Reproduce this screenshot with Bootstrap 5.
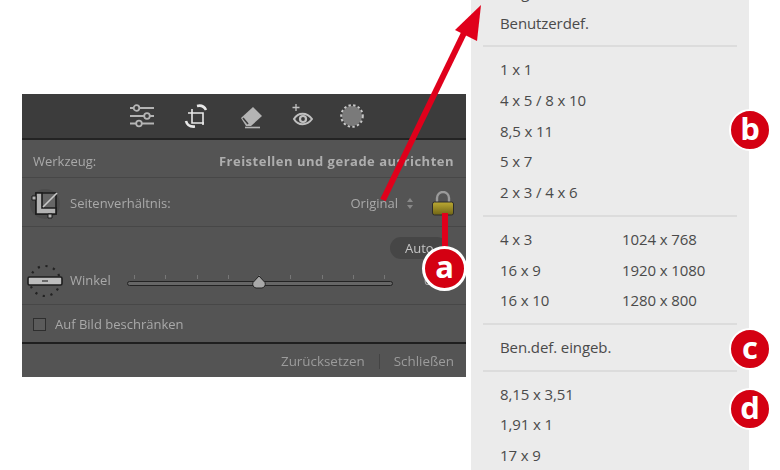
<!DOCTYPE html>
<html lang="de">
<head>
  <meta charset="UTF-8">
  <meta name="viewport" content="width=device-width, initial-scale=1.0">
  <title>Freistellen</title>
  <link href="https://cdn.jsdelivr.net/npm/bootstrap@5.3.0/dist/css/bootstrap.min.css" rel="stylesheet">
  <script src="https://cdn.jsdelivr.net/npm/bootstrap@5.3.0/dist/js/bootstrap.bundle.min.js" defer></script>
  <style>
    body { background: #fff; font-family: "Open Sans", "Liberation Sans", sans-serif; }
    .stage { width: 780px; height: 470px; overflow: hidden; }

    /* dark panel */
    .crop-panel { width: 444px; height: 283px; margin: 94px 0 0 22px; background: #545454; color: #a9a9a9; font-size: 13px; filter: blur(.35px); }
    .tool-bar { height: 46px; background: #3c3c3c; border-bottom: 2px solid #232323; gap: 27px; padding-left: 108px; }
    .tool-row { padding: 0 12px 0 11px; border-bottom: 1px solid #474747; }
    .row-tool { height: 38px; padding-top: 6px; }
    .row-aspect { height: 49px; padding-left: 8px; padding-top: 3px; }
    .row-angle { height: 78px; padding-left: 5px; position: relative; }
    .row-limit { height: 39px; padding-top: 2px; border-bottom: 2px solid #1f1f1f; }
    .row-foot { height: 33px; padding-top: 2px; font-size: 13.4px; color: #9c9c9c; }
    .tool-title { font-weight: 700; letter-spacing: .5px; color: #aeaeae; }
    .aspect-label { margin-left: 10px; }
    .aspect-stepper { margin: 0 19px 0 9px; }
    .auto-pill { position: absolute; left: 368px; top: 10px; width: 58px; height: 22px; padding-left: 15px; border-radius: 11px; background: #464646; color: #c4c4c4; line-height: 22px; }
    .angle-line { margin-top: 36px; }
    .angle-label { margin-left: 7px; width: 57px; }
    .slider-track { width: 266px; height: 5px; margin-top: 4px; border: 1px solid #232323; background: #666; border-radius: 3px; position: relative; }
    .slider-track::before { content: ""; position: absolute; left: 6px; right: 6px; top: -7px; height: 4px; background: repeating-linear-gradient(90deg, #777 0 1px, transparent 1px 31.3px); }
    .slider-thumb { position: absolute; left: 124px; top: -7px; }
    .angle-value { margin-left: 31px; }
    .limit-box { width: 13px; height: 13px; border: 1px solid #2e2e2e; background: #5b5b5b; margin-right: 9px; }
    .foot-sep { width: 1px; height: 15px; background: #444; margin: 0 14px; }

    /* light menu */
    .ratio-menu { width: 278px; height: 470px; margin-left: 5px; background: #ebebeb; color: #4a4a4a; font-size: 15px; letter-spacing: -.1px; padding: 0 12px; }
    .ratio-list { margin-top: -23px; }
    .ratio-item { height: 30.7px; line-height: 30.7px; padding-left: 17px; }
    .ratio-left { width: 122px; }
    .ratio-sep { height: 2px; background: #dcdcdc; margin: 7px 0; }

    /* annotations lying over the picture */
    .arrow-layer { position: absolute; left: 0; top: 0; pointer-events: none; }
    .call-out { position: absolute; width: 42px; height: 42px; border-radius: 50%; background: #d40012; border: 2px solid #fff; color: #fff; font-weight: 700; font-size: 31px; line-height: 34px; text-align: center; }
    .call-a { left: 422px; top: 246px; width: 45px; height: 45px; border-width: 3px; line-height: 34px; }
    .call-b { left: 729px; top: 109px; }
    .call-c { left: 729px; top: 328px; }
    .call-d { left: 729px; top: 388px; }
  </style>
</head>
<body>
  <div class="stage position-relative d-flex align-items-start">
    <div class="crop-panel d-flex flex-column flex-shrink-0">
      <div class="tool-bar d-flex align-items-center">
        <svg width="24" height="26" viewBox="0 0 24 26" fill="none" stroke="#b4b4b4" stroke-width="1.8">
          <path d="M0 5h3M10 5h14M0 13h14M20 13h4M0 20.500h6M12 20.500h12"/>
          <circle cx="6.500" cy="5" r="2.800"/><circle cx="17" cy="13" r="2.800"/><circle cx="9" cy="20.500" r="2.800"/>
        </svg>
        <svg width="30" height="30" viewBox="0 0 30 30" fill="none" stroke="#e8e8e8" stroke-width="1.600">
          <path d="M11 8v14h12M7 12h15v12"/>
          <path d="M16 5c4-1 7 0 9 4M5 20c1 4 4 6 9 5.500" stroke-width="2.600"/>
        </svg>
        <svg width="26" height="26" viewBox="0 0 26 26" fill="none">
          <path d="M3 15 15 4l9 9-11 10H8z" fill="#b4b4b4"/>
          <path d="M5 15l5 6" stroke="#3c3c3c" stroke-width="1.600"/>
          <path d="M7 24.500h15" stroke="#b4b4b4" stroke-width="1.600"/>
        </svg>
        <svg width="22" height="28" viewBox="0 0 22 28" fill="none" stroke="#c0c0c0" stroke-width="2">
          <path d="M5 2v7M1.500 5.500h7" stroke-width="1.300"/>
          <path d="M3 17c4-7 13-7 18 0-5 7-14 7-18 0z"/>
          <circle cx="12" cy="17" r="3" stroke-width="2.200"/>
        </svg>
        <svg width="24" height="26" viewBox="0 0 24 26" fill="none">
          <circle cx="12" cy="13" r="10" fill="#7a7a7a"/>
          <circle cx="12" cy="13" r="10.800" stroke="#c8c8c8" stroke-width="2" stroke-dasharray="2.400 2.300"/>
        </svg>
      </div>

      <div class="tool-row row-tool d-flex align-items-center justify-content-between">
        <span>Werkzeug:</span>
        <span class="tool-title">Freistellen und gerade ausrichten</span>
      </div>

      <div class="tool-row row-aspect d-flex align-items-center">
        <svg width="30" height="30" viewBox="0 0 30 30" fill="none">
          <circle cx="15" cy="15" r="15" fill="#4c4c4c"/>
          <path d="M6 4h20v21H6z" fill="#666" stroke="#1c1c1c" stroke-width="1.600"/>
          <path d="M6 4h6v15h14v6H6z" fill="#b2b2b2" stroke="#1c1c1c" stroke-width="1.600"/>
          <path d="M13 18 27 4" stroke="#c8c8c8" stroke-width="1.600"/>
          <path d="M2 7h4v4H2zM18 25h4v4h-4z" fill="#b2b2b2" stroke="#1c1c1c"/>
        </svg>
        <span class="aspect-label me-auto">Seitenverhältnis:</span>
        <span>Original</span>
        <svg class="aspect-stepper" width="6" height="11" viewBox="0 0 6 11" fill="#888">
          <path d="M3 0 6 4H0zM3 11 0 7h6z"/>
        </svg>
        <svg width="22" height="25" viewBox="0 0 22 25" fill="none">
          <defs>
            <linearGradient id="lockBody" x1="0" y1="0" x2="0" y2="1">
              <stop offset="0" stop-color="#bcaa33"/><stop offset="1" stop-color="#6f6416"/>
            </linearGradient>
          </defs>
          <path d="M5 12V7a6 6 0 0 1 12 0v5" stroke="#9a9a9a" stroke-width="2.400"/>
          <rect x="0.500" y="11" width="21" height="13" rx="2" fill="url(#lockBody)" stroke="#2c2c2c"/>
        </svg>
      </div>

      <div class="tool-row row-angle">
        <span class="auto-pill">Auto</span>
        <div class="angle-line d-flex align-items-center">
          <svg width="36" height="36" viewBox="0 0 36 36" fill="none">
            <circle cx="18" cy="18" r="15" stroke="#222" stroke-width="2.200" stroke-dasharray="2.200 5.650"/>
            <rect x="1" y="14" width="34" height="8" rx="1.500" fill="#bdbdbd" stroke="#1c1c1c" stroke-width="1.600"/>
            <path d="M15 18h6" stroke="#444" stroke-width="1.400"/>
          </svg>
          <span class="angle-label">Winkel</span>
          <div class="slider-track flex-shrink-0">
            <svg class="slider-thumb" width="14" height="14" viewBox="0 0 14 14">
              <path d="M7 1 13 7.500a4 4 0 0 1-3 5.500H4a4 4 0 0 1-3-5.500z" fill="#a8a8a8" stroke="#222"/>
            </svg>
          </div>
          <span class="angle-value">0,0</span>
        </div>
      </div>

      <div class="tool-row row-limit d-flex align-items-center">
        <span class="limit-box"></span>
        <span>Auf Bild beschränken</span>
      </div>

      <div class="row-foot d-flex align-items-center justify-content-end pe-2">
        <span>Zurücksetzen</span>
        <span class="foot-sep"></span>
        <span class="pe-1">Schließen</span>
      </div>
    </div>

    <div class="ratio-menu flex-shrink-0">
      <div class="ratio-list">
        <div class="ratio-item">Original</div>
        <div class="ratio-item">Benutzerdef.</div>
        <div class="ratio-sep"></div>
        <div class="ratio-item">1 x 1</div>
        <div class="ratio-item">4 x 5 / 8 x 10</div>
        <div class="ratio-item">8,5 x 11</div>
        <div class="ratio-item">5 x 7</div>
        <div class="ratio-item">2 x 3 / 4 x 6</div>
        <div class="ratio-sep"></div>
        <div class="ratio-item d-flex"><span class="ratio-left">4 x 3</span><span>1024 x 768</span></div>
        <div class="ratio-item d-flex"><span class="ratio-left">16 x 9</span><span>1920 x 1080</span></div>
        <div class="ratio-item d-flex"><span class="ratio-left">16 x 10</span><span>1280 x 800</span></div>
        <div class="ratio-sep"></div>
        <div class="ratio-item">Ben.def. eingeb.</div>
        <div class="ratio-sep"></div>
        <div class="ratio-item">8,15 x 3,51</div>
        <div class="ratio-item">1,91 x 1</div>
        <div class="ratio-item">17 x 9</div>
      </div>
    </div>

    <svg class="arrow-layer" width="780" height="470" viewBox="0 0 780 470" fill="none">
      <path d="M383 200 464 33" stroke="#e0001b" stroke-width="6"/>
      <path d="M481 5 477 41 455 30z" fill="#e0001b"/>
      <path d="M445 213V250" stroke="#e0001b" stroke-width="6"/>
    </svg>
    <span class="call-out call-a">a</span>
    <span class="call-out call-b">b</span>
    <span class="call-out call-c">c</span>
    <span class="call-out call-d">d</span>
  </div>
</body>
</html>
